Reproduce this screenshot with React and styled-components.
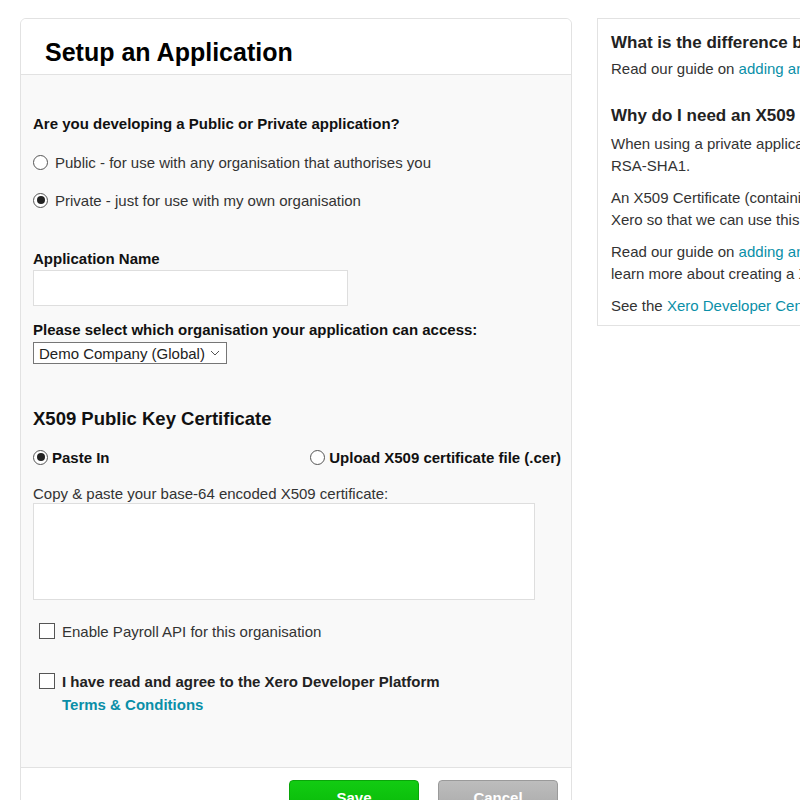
import React from "react";
import styled, { createGlobalStyle } from "styled-components";

const Global = createGlobalStyle`
  html, body {
    margin: 0;
    padding: 0;
    background: #fff;
    overflow: hidden;
  }
  body {
    font-family: "Liberation Sans", Arial, sans-serif;
    color: #333;
  }
`;

const Page = styled.div`
  display: flex;
  align-items: flex-start;
  gap: 25px;
  padding: 18px 0 0 20px;
  width: 1100px;
`;

const Panel = styled.div`
  width: 552px;
  border: 1px solid #e2e2e2;
  border-radius: 6px;
  box-sizing: border-box;
  overflow: hidden;
  background: #f9f9f9;
`;

const Header = styled.div`
  background: #fff;
  border-bottom: 1px solid #e2e2e2;
  height: 55px;
  padding: 0 24px;
  display: flex;
  align-items: center;
`;

const Title = styled.h1`
  margin: 12px 0 0;
  font-size: 25px;
  font-weight: 700;
  color: #000;
`;

const Body = styled.div`
  padding: 40px 10px 54px 12px;
  display: flex;
  flex-direction: column;
  font-size: 15px;
  line-height: 17px;
`;

const Question = styled.div`
  font-size: 15px;
  font-weight: 700;
  color: #111;
  margin-top: ${p => p.mt || 0}px;
`;

const RadioRow = styled.label`
  display: flex;
  align-items: center;
  gap: ${p => (p.tight ? 4 : 7)}px;
  font-size: 15px;
  font-weight: ${p => (p.bold ? 700 : 400)};
  color: ${p => (p.bold ? "#111" : "#333")};
  height: 20px;
`;

const RadioList = styled.div`
  display: flex;
  flex-direction: column;
  gap: 18px;
  margin-top: 20px;
`;

const Radio = styled.span`
  width: 15px;
  height: 15px;
  border: 1px solid #555;
  border-radius: 50%;
  background: #fff;
  box-sizing: border-box;
  display: flex;
  align-items: center;
  justify-content: center;
  flex-shrink: 0;
  &::after {
    content: "";
    width: 8px;
    height: 8px;
    border-radius: 50%;
    background: ${p => (p.checked ? "#222" : "transparent")};
  }
`;

const TextInput = styled.div`
  width: 315px;
  height: 36px;
  background: #fff;
  border: 1px solid #dedede;
  box-sizing: border-box;
  margin-top: 3px;
`;

const Select = styled.div`
  width: 194px;
  height: 22px;
  border: 1px solid #767676;
  background: #fff;
  box-sizing: border-box;
  display: flex;
  align-items: center;
  justify-content: space-between;
  padding: 0 6px 0 5px;
  font-size: 15px;
  color: #222;
  margin-top: 4px;
`;

const SectionTitle = styled.h2`
  margin: 44px 0 0;
  font-size: 18.5px;
  line-height: 22px;
  font-weight: 700;
  color: #111;
`;

const CertChoice = styled.div`
  display: flex;
  justify-content: space-between;
  margin-top: 17px;
`;

const Hint = styled.div`
  color: #333;
  margin-top: 18px;
`;

const TextArea = styled.div`
  width: 502px;
  height: 97px;
  background: #fff;
  border: 1px solid #dedede;
  box-sizing: border-box;
  margin-top: 1px;
`;

const CheckRow = styled.div`
  display: flex;
  align-items: flex-start;
  gap: 7px;
  margin: ${p => p.mt}px 0 0 6px;
  font-weight: ${p => (p.bold ? 700 : 400)};
  color: ${p => (p.bold ? "#222" : "#333")};
  line-height: 17px;
`;

const Box = styled.span`
  width: 16px;
  height: 16px;
  border: 1px solid #555;
  background: #fff;
  box-sizing: border-box;
  flex-shrink: 0;
`;

const TermsLink = styled.a`
  display: block;
  color: #0a8fa8;
  font-weight: 700;
  margin-top: 6px;
  text-decoration: none;
`;

const Footer = styled.div`
  background: #fff;
  border-top: 1px solid #e2e2e2;
  display: flex;
  justify-content: flex-end;
  gap: 19px;
  padding: 12px 13px 12px;
`;

const Button = styled.button`
  width: ${p => p.w}px;
  height: 34px;
  border-radius: 4px;
  border: 1px solid ${p => (p.green ? "#0aa50a" : "#9a9a9a")};
  background: ${p =>
    p.green
      ? "linear-gradient(#12cc12, #08b808)"
      : "linear-gradient(#bdbdbd, #a9a9a9)"};
  color: #fff;
  font-family: "Liberation Sans", Arial, sans-serif;
  font-size: 15px;
  font-weight: 700;
  padding-top: 8px;
  box-sizing: border-box;
  display: flex;
  justify-content: center;
  align-items: flex-start;
`;

const Side = styled.div`
  width: 360px;
  border: 1px solid #e2e2e2;
  background: #fff;
  box-sizing: border-box;
  padding: 13px 13px 8px;
  font-size: 15px;
  color: #333;
  line-height: 22px;
`;

const SideTitle = styled.h3`
  margin: ${p => p.mt || 0}px 0 ${p => p.mb || 4}px;
  font-size: 17px;
  font-weight: 700;
  color: #222;
  white-space: nowrap;
  line-height: 22px;
`;

const SideText = styled.p`
  margin: ${p => p.mt || 0}px 0 0;
  white-space: nowrap;
`;

const Link = styled.a`
  color: #0a8fa8;
  text-decoration: none;
`;

const Chevron = () => (
  <svg width="10" height="6" viewBox="0 0 10 6" fill="none">
    <path d="M1 1l4 4 4-4" stroke="#555" strokeWidth="1" />
  </svg>
);

export default function App() {
  return (
    <>
      <Global />
      <Page>
        <Panel>
          <Header>
            <Title>Setup an Application</Title>
          </Header>
          <Body>
            <Question>Are you developing a Public or Private application?</Question>
            <RadioList>
              <RadioRow>
                <Radio />
                Public - for use with any organisation that authorises you
              </RadioRow>
              <RadioRow>
                <Radio checked />
                Private - just for use with my own organisation
              </RadioRow>
            </RadioList>
            <Question mt={40}>Application Name</Question>
            <TextInput />
            <Question mt={15}>Please select which organisation your application can access:</Question>
            <Select>
              Demo Company (Global)
              <Chevron />
            </Select>
            <SectionTitle>X509 Public Key Certificate</SectionTitle>
            <CertChoice>
              <RadioRow bold tight>
                <Radio checked />
                Paste In
              </RadioRow>
              <RadioRow bold tight>
                <Radio />
                Upload X509 certificate file (.cer)
              </RadioRow>
            </CertChoice>
            <Hint>Copy &amp; paste your base-64 encoded X509 certificate:</Hint>
            <TextArea />
            <CheckRow mt={23}>
              <Box />
              <span>Enable Payroll API for this organisation</span>
            </CheckRow>
            <CheckRow mt={33} bold>
              <Box />
              <div>
                I have read and agree to the Xero Developer Platform
                <TermsLink href="#">Terms &amp; Conditions</TermsLink>
              </div>
            </CheckRow>
          </Body>
          <Footer>
            <Button green w={130}>Save</Button>
            <Button w={120}>Cancel</Button>
          </Footer>
        </Panel>
        <Side>
          <SideTitle>What is the difference between Public and Private?</SideTitle>
          <SideText>
            Read our guide on <Link href="#">adding and managing applications</Link>
          </SideText>
          <SideTitle mt={25} mb={6}>Why do I need an X509 Certificate?</SideTitle>
          <SideText>When using a private application, requests are signed with</SideText>
          <SideText>RSA-SHA1.</SideText>
          <SideText mt={10}>An X509 Certificate (containing your public key) is uploaded to</SideText>
          <SideText>Xero so that we can use this to verify the signature.</SideText>
          <SideText mt={10}>
            Read our guide on <Link href="#">adding and managing applications</Link> to
          </SideText>
          <SideText>learn more about creating a X509 certificate.</SideText>
          <SideText mt={10}>
            See the <Link href="#">Xero Developer Centre</Link>
          </SideText>
        </Side>
      </Page>
    </>
  );
}
